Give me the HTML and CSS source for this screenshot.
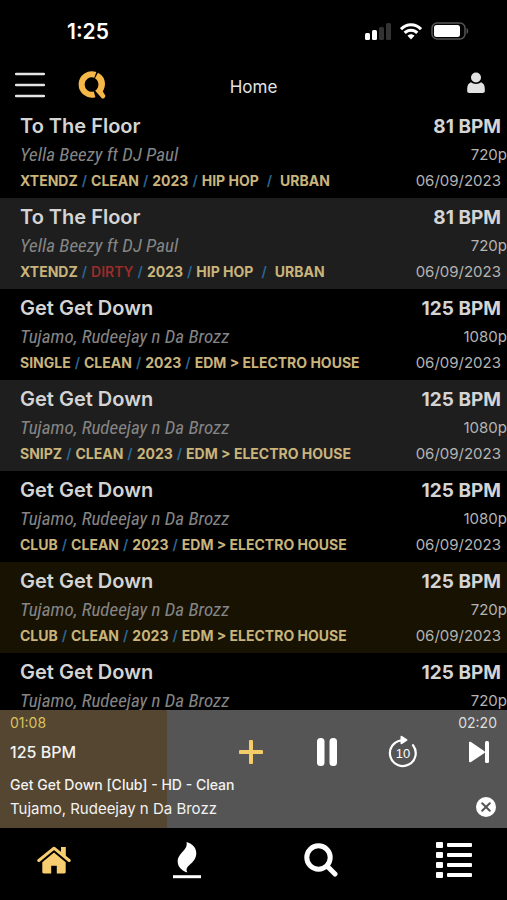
FILE: index.html
```html
<!DOCTYPE html>
<html lang="en">
<head>
<meta charset="utf-8">
<meta name="viewport" content="width=device-width, initial-scale=1">
<title>Home</title>
<link rel="stylesheet" href="styles.css">
</head>
<body>
<div class="status">
  <span class="clock">1:25</span>
  <div class="status-icons">
    <svg width="26" height="17" viewBox="0 0 26 17" aria-hidden="true"><rect y="10" width="5" height="7" rx="1.5" fill="#fff"/><rect x="7" y="7" width="5" height="10" rx="1.5" fill="#fff"/><rect x="14" y="4" width="5" height="13" rx="1.5" fill="#333"/><rect x="21" y="0" width="5" height="17" rx="1.5" fill="#333"/></svg>
    <svg width="22" height="17" viewBox="0 0 22 17" aria-hidden="true"><g fill="none" stroke="#fff" stroke-width="3"><path d="M1 6.200C6.500 .2 15.500 .2 21 6.200"/><path d="M4.700 9.900C8.200 6.200 13.800 6.200 17.300 9.900"/></g><path d="M7.500 12.700c2-2 5-2 7 0L11 16.600z" fill="#fff"/></svg>
    <svg width="38" height="18" viewBox="0 0 38 18" aria-hidden="true"><rect x="1" y="1" width="33" height="16" rx="5" fill="none" stroke="#555" stroke-width="1.500"/><rect x="3" y="3" width="26" height="12" rx="2.500" fill="#fff"/><path d="M35.500 6v6c2.300-1 2.300-5 0-6z" fill="#555"/></svg>
  </div>
</div>
<header class="header">
  <div class="header-left">
    <button class="icon-button" aria-label="Menu"><svg width="30" height="26" viewBox="0 0 30 26"><path d="M1 2h28M1 13h28M1 24h28" stroke="#e4e4e4" stroke-width="2.400" stroke-linecap="round"/></svg></button>
    <a class="logo" href="#" aria-label="Q"><svg width="28" height="28" viewBox="0 0 28 28"><path d="M17.300 3.900A10.200 10.200 0 1 0 16.600 23.300" fill="none" stroke="#f6b749" stroke-width="6"/><path d="M19.900 1.800C27 5 29 13.500 24.800 20.400L27.200 24.200C27.800 26 25.800 28.200 24 27.400L17.200 19.800C21.500 17 21.600 10 17 7.300Z" fill="#f6b749"/></svg></a>
  </div>
  <h1 class="page-title">Home</h1>
  <button class="icon-button account" aria-label="Account"><svg width="18" height="22" viewBox="0 0 18 22"><circle cx="9" cy="5.500" r="5" fill="#e2e2e2"/><path d="M4 10.300C5.400 11.600 7 12 9 12s3.600-.4 5-1.700c2.500.8 3.800 3.200 3.800 6.500v2.200c0 1.300-.8 2-2 2H2.200c-1.200 0-2-.7-2-2v-2.200c0-3.300 1.300-5.700 3.800-6.500z" fill="#e2e2e2"/></svg></button>
</header>
<main class="tracks">
  <article class="track">
    <h2 class="name">To The Floor</h2><span class="bpm">81 BPM</span>
    <p class="artist">Yella Beezy ft DJ Paul</p><span class="quality">720p</span>
    <p class="tags"><b>XTENDZ</b><i>/</i><b>CLEAN</b><i>/</i><b>2023</b><i>/</i><b>HIP HOP</b><i class="wide">/</i><b>URBAN</b></p><time class="date">06/09/2023</time>
  </article>
  <article class="track alt">
    <h2 class="name">To The Floor</h2><span class="bpm">81 BPM</span>
    <p class="artist">Yella Beezy ft DJ Paul</p><span class="quality">720p</span>
    <p class="tags"><b>XTENDZ</b><i>/</i><b class="dirty">DIRTY</b><i>/</i><b>2023</b><i>/</i><b>HIP HOP</b><i class="wide">/</i><b>URBAN</b></p><time class="date">06/09/2023</time>
  </article>
  <article class="track">
    <h2 class="name">Get Get Down</h2><span class="bpm">125 BPM</span>
    <p class="artist">Tujamo, Rudeejay n Da Brozz</p><span class="quality">1080p</span>
    <p class="tags"><b>SINGLE</b><i>/</i><b>CLEAN</b><i>/</i><b>2023</b><i>/</i><b>EDM &gt; ELECTRO HOUSE</b></p><time class="date">06/09/2023</time>
  </article>
  <article class="track alt">
    <h2 class="name">Get Get Down</h2><span class="bpm">125 BPM</span>
    <p class="artist">Tujamo, Rudeejay n Da Brozz</p><span class="quality">1080p</span>
    <p class="tags"><b>SNIPZ</b><i>/</i><b>CLEAN</b><i>/</i><b>2023</b><i>/</i><b>EDM &gt; ELECTRO HOUSE</b></p><time class="date">06/09/2023</time>
  </article>
  <article class="track">
    <h2 class="name">Get Get Down</h2><span class="bpm">125 BPM</span>
    <p class="artist">Tujamo, Rudeejay n Da Brozz</p><span class="quality">1080p</span>
    <p class="tags"><b>CLUB</b><i>/</i><b>CLEAN</b><i>/</i><b>2023</b><i>/</i><b>EDM &gt; ELECTRO HOUSE</b></p><time class="date">06/09/2023</time>
  </article>
  <article class="track playing">
    <h2 class="name">Get Get Down</h2><span class="bpm">125 BPM</span>
    <p class="artist">Tujamo, Rudeejay n Da Brozz</p><span class="quality">720p</span>
    <p class="tags"><b>CLUB</b><i>/</i><b>CLEAN</b><i>/</i><b>2023</b><i>/</i><b>EDM &gt; ELECTRO HOUSE</b></p><time class="date">06/09/2023</time>
  </article>
  <article class="track">
    <h2 class="name">Get Get Down</h2><span class="bpm">125 BPM</span>
    <p class="artist">Tujamo, Rudeejay n Da Brozz</p><span class="quality">720p</span>
  </article>
</main>
<section class="player" style="--played: 33%" aria-label="Player">
  <div class="player-row times"><span class="elapsed">01:08</span><span class="total">02:20</span></div>
  <div class="player-row controls">
    <span class="player-bpm">125 BPM</span>
    <div class="buttons">
      <button class="icon-button" aria-label="Add"><svg width="24" height="24" viewBox="0 0 24 24"><path d="M12 1.500v21M1.500 12h21" stroke="#f6cc68" stroke-width="4" stroke-linecap="round"/></svg></button>
      <button class="icon-button" aria-label="Pause"><svg width="20" height="30" viewBox="0 0 20 30"><rect x="0" y="1" width="7.500" height="28" rx="3.500" fill="#fff"/><rect x="12.500" y="1" width="7.500" height="28" rx="3.500" fill="#fff"/></svg></button>
      <button class="icon-button" aria-label="Forward 10 seconds"><svg width="30" height="34" viewBox="0 0 30 34"><path d="M13.500 5.300A12.900 12.900 0 1 0 25 10.200" fill="none" stroke="#fff" stroke-width="2.200" stroke-linecap="round"/><path d="M12.500 1.700v6.600c0 1 .8 1.200 1.500.8l5-3.300c.6-.4.6-1.200 0-1.600L14 .9c-.8-.5-1.500-.1-1.500.8z" fill="#fff"/><text class="skip-label" x="15" y="23" text-anchor="middle">10</text></svg></button>
      <button class="icon-button" aria-label="Next"><svg width="22" height="22" viewBox="0 0 22 22"><path d="M1 1.800C1 .6 2 .3 3 1l13.500 9.200c.7.5.7 1.200 0 1.700L3 21c-1 .7-2 .2-2-.9z" fill="#fff"/><rect x="17" y="0" width="4" height="22" rx="1.500" fill="#fff"/></svg></button>
    </div>
  </div>
  <div class="player-row now">
    <div class="now-text"><p class="now-title">Get Get Down [Club] - HD - Clean</p><p>Tujamo, Rudeejay n Da Brozz</p></div>
    <button class="icon-button close" aria-label="Close"><svg width="20" height="20" viewBox="0 0 20 20"><circle cx="10" cy="10" r="10" fill="#fff"/><path d="M6.200 6.200l7.600 7.600M13.800 6.200l-7.600 7.600" stroke="#555" stroke-width="2" stroke-linecap="round"/></svg></button>
  </div>
</section>
<nav class="tabs">
  <a href="#" aria-label="Home"><svg width="34" height="28" viewBox="0 0 34 28"><path d="M17 6.500 5.300 16.200V26c0 .8.500 1.400 1.400 1.400h7.500v-7.600h5.600v7.600h7.500c.9 0 1.400-.6 1.400-1.400v-9.800z" fill="#f7cd70"/><path d="M2.500 16.700 17 4.800l14.500 11.900" fill="none" stroke="#000" stroke-width="1.500"/><path d="M24 1h4.800v10.500L24 7.500z" fill="#f7cd70"/><path d="M1.800 14.500 17 2.200l15.200 12.300" fill="none" stroke="#f7cd70" stroke-width="3" stroke-linecap="round" stroke-linejoin="round"/></svg></a>
  <a href="#" aria-label="Hot"><svg width="30" height="38" viewBox="0 0 30 38"><path d="M14.500 1C16.500 9 5.700 12 5.700 20.500 5.700 26 9.500 29.500 15.300 31.500 13.800 28.500 14.500 26.500 17.500 24 21 21 24.300 17.500 24.300 12 24.300 6.500 20 2.500 14.500 1z" fill="#fff"/><path d="M1 35.700h28" stroke="#fff" stroke-width="3"/></svg></a>
  <a href="#" aria-label="Search"><svg width="34" height="34" viewBox="0 0 34 34"><circle cx="14.500" cy="14.500" r="11.700" fill="none" stroke="#fff" stroke-width="5"/><path d="M23.500 23.500 31 31" stroke="#fff" stroke-width="5" stroke-linecap="round"/></svg></a>
  <a href="#" aria-label="Lists"><svg width="36" height="36" viewBox="0 0 36 36"><g fill="#fff"><rect width="7" height="6" rx="1"/><rect y="10" width="7" height="6" rx="1"/><rect y="20" width="7" height="6" rx="1"/><rect y="30" width="7" height="6" rx="1"/><rect x="11" y="1" width="25" height="4" rx="1"/><rect x="11" y="11" width="25" height="4" rx="1"/><rect x="11" y="21" width="25" height="4" rx="1"/><rect x="11" y="31" width="25" height="4" rx="1"/></g></svg></a>
</nav>
</body>
</html>
```
FILE: styles.css
```css
* { box-sizing: border-box; }

body {
  margin: 0;
  height: 100vh;
  display: flex;
  flex-direction: column;
  background: #000;
  color: #d4d4d4;
  font-family: Inter, "Liberation Sans", sans-serif;
}

h1, h2, p { margin: 0; }
svg { display: block; }

.icon-button {
  display: flex;
  align-items: center;
  justify-content: center;
  padding: 0;
  border: 0;
  background: none;
}

.status {
  display: flex;
  align-items: center;
  justify-content: space-between;
  height: 62px;
  padding: 0 38px 0 67px;
}
.clock { color: #fff; font-size: 21px; font-weight: 600; }
.status-icons { display: flex; align-items: center; gap: 9px; }

.header {
  display: grid;
  grid-template-columns: 1fr auto 1fr;
  align-items: center;
  height: 45px;
  padding: 0 15px;
}
.header-left { display: flex; align-items: center; gap: 33px; }
.page-title { padding-top: 4px; color: #e4e4e4; font-size: 17px; font-weight: 400; line-height: 24px; }
.account { justify-self: end; width: 32px; padding-bottom: 4px; }

.tracks { flex: 1 1 0; min-height: 0; overflow: hidden; }
.track {
  display: grid;
  grid-template-columns: 1fr auto;
  grid-template-rows: 26px 31px 20px;
  align-items: center;
  padding: 6px 0 8px 20px;
  white-space: nowrap;
}
.alt { background: #1e1e1e; }
.playing { background: #171202; }

.name { font-size: 20px; font-weight: 600; }
.bpm, .quality, .date { text-align: right; }
.bpm { padding-right: 6px; font-size: 19px; font-weight: 700; }
.artist {
  color: #858585;
  font-family: "Roboto Condensed", "Liberation Sans Narrow", Roboto, sans-serif;
  font-size: 19px;
  font-style: italic;
}
.quality { color: #b4b4b4; font-size: 15px; }
.date { padding-right: 6px; color: #b4b4b4; font-size: 15px; }
.tags { display: flex; gap: 4px; color: #c9b47c; font-size: 14px; }
.tags b { font-weight: 700; }
.tags i { color: #2a6796; font-weight: 600; font-style: normal; }
.tags .wide { margin: 0 4px; }
.tags .dirty { color: #9b2c2a; font-weight: 600; }

.player {
  height: 118px;
  color: #f2f2f2;
  background: linear-gradient(to right, #544630 var(--played), #555 var(--played));
}
.player-row { display: flex; align-items: center; justify-content: space-between; padding: 0 10px; }
.times { height: 24px; font-size: 14px; }
.elapsed { color: #dcc15f; }
.total { color: #dedede; }
.controls { height: 36px; }
.player-bpm { font-size: 16px; font-weight: 500; }
.buttons { display: flex; gap: 40px; }
.buttons .icon-button { width: 36px; }
.skip-label { fill: #fff; font-size: 13px; font-weight: 500; }
.now { align-items: flex-end; padding-top: 3px; font-size: 15px; line-height: 24px; }
.now-title { font-size: 14px; font-weight: 500; }
.close { width: 22px; height: 28px; }

.tabs {
  display: flex;
  justify-content: space-between;
  height: 72px;
  padding: 8px 29px 16px 30px;
}
.tabs a { display: flex; align-items: center; justify-content: center; width: 48px; }
```
